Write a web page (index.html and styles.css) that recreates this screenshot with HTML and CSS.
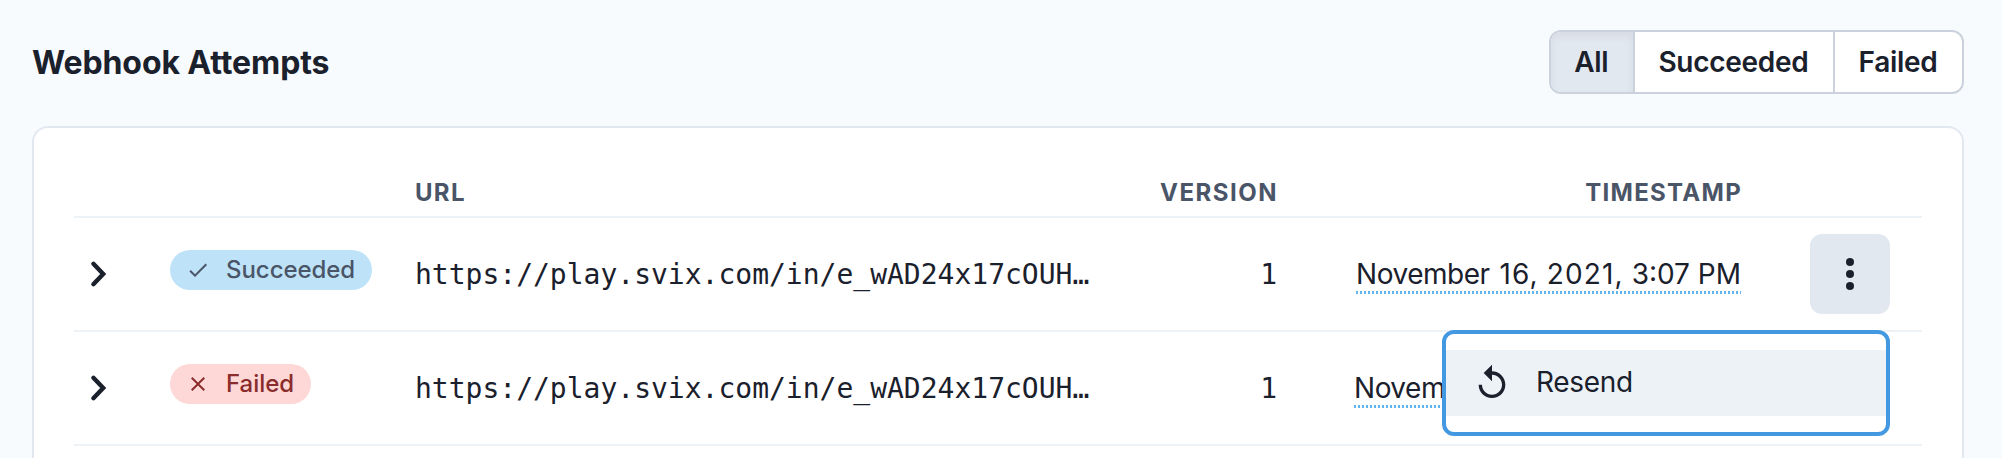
FILE: index.html
```html
<!DOCTYPE html>
<html lang="en">
<head>
<meta charset="utf-8">
<title>Webhook Attempts</title>
<link rel="stylesheet" href="styles.css">
</head>
<body>
<header class="page-header">
  <h1 class="title">Webhook Attempts</h1>
  <div class="filter">
    <button class="filter-btn active">All</button>
    <button class="filter-btn">Succeeded</button>
    <button class="filter-btn">Failed</button>
  </div>
</header>
<main class="card">
  <div class="row head">
    <span></span><span></span>
    <span>URL</span>
    <span class="right wide">Version</span>
    <span class="right">Timestamp</span>
    <span></span>
  </div>
  <div class="row">
    <svg class="chevron" viewBox="0 0 24 24"><path d="M9.7 6.9 14.6 12l-4.9 5.1"/></svg>
    <span class="badge ok"><svg viewBox="0 0 24 24"><path d="M9 16.17L4.83 12l-1.42 1.41L9 19 21 7l-1.41-1.41z"/></svg>Succeeded</span>
    <span class="url">https://play.svix.com/in/e_wAD24x17cOUH…</span>
    <span class="version">1</span>
    <span class="right"><span class="time"><span class="month">November</span> <span class="day">16, 2021,</span> 3:07 PM</span></span>
    <div class="actions">
      <button class="more"><svg viewBox="0 0 40 40"><circle cx="20" cy="8" r="4"/><circle cx="20" cy="20" r="4"/><circle cx="20" cy="32" r="4"/></svg></button>
      <div class="menu">
        <div class="menu-item"><svg viewBox="0 0 24 24"><path d="M12 5V1L7 6l5 5V7c3.31 0 6 2.69 6 6s-2.69 6-6 6-6-2.69-6-6H4c0 4.42 3.58 8 8 8s8-3.58 8-8-3.58-8-8-8z"/></svg><span>Resend</span></div>
      </div>
    </div>
  </div>
  <div class="row">
    <svg class="chevron" viewBox="0 0 24 24"><path d="M9.7 6.9 14.6 12l-4.9 5.1"/></svg>
    <span class="badge fail"><svg viewBox="0 0 24 24"><path d="M19 6.41L17.59 5 12 10.59 6.41 5 5 6.41 10.59 12 5 17.59 6.41 19 12 13.41 17.59 19 19 17.59 13.41 12z"/></svg>Failed</span>
    <span class="url">https://play.svix.com/in/e_wAD24x17cOUH…</span>
    <span class="version">1</span>
    <span class="right"><span class="time"><span class="month">November</span> <span class="day">16, 2021,</span> 3:06 PM</span></span>
    <div class="actions"></div>
  </div>
</main>
</body>
</html>
```
FILE: styles.css
```css
* { box-sizing: border-box; }
body {
  margin: 0;
  height: 458px;
  overflow: hidden;
  padding: 30px 38px 0 32px;
  background: #f8fbfe;
  color: #1a202c;
  font-family: Inter, "Liberation Sans", sans-serif;
  font-size: 28px;
}
.page-header {
  display: flex;
  justify-content: space-between;
  align-items: center;
  height: 64px;
  margin-bottom: 32px;
}
.title {
  margin: 0;
  padding-top: 1px;
  font-size: 32px;
  font-weight: 700;
  line-height: 63px;
  letter-spacing: -0.1px;
}
.filter {
  display: flex;
  height: 64px;
  border: 2px solid #cbd2dd;
  border-radius: 12px;
  overflow: hidden;
  background: #fff;
}
.filter-btn {
  margin: 0;
  padding: 0 24.5px 0 23.5px;
  border: 0;
  border-left: 2px solid #cbd2dd;
  background: none;
  color: inherit;
  font: 600 28px/60px Inter, "Liberation Sans", sans-serif;
  letter-spacing: -0.28px;
}
.filter-btn.active {
  border-left: 0;
  background: #e2e8f0;
  box-shadow: inset 0 4px 8px rgba(0, 0, 0, 0.06);
}
.card {
  width: 1932px;
  height: 332px;
  padding: 0 40px;
  border: 2px solid #e2e8f0;
  border-bottom: 0;
  border-radius: 16px 16px 0 0;
  background: #fff;
}
.row {
  display: grid;
  grid-template-columns: 96px 245px 714px 148px 464px 1fr;
  align-items: center;
  height: 114px;
  border-bottom: 2px solid #edf2f7;
}
.head {
  height: 90px;
  padding-top: 41px;
  color: #4a5568;
  font-size: 24px;
  font-weight: 700;
  letter-spacing: 1.3px;
  text-transform: uppercase;
}
.right { text-align: right; }
.head .right { margin-right: -1px; }
.wide { letter-spacing: 1.5px; }
.chevron {
  width: 48px;
  height: 48px;
  fill: none;
  stroke: #1a202c;
  stroke-width: 2.2;
  stroke-linecap: round;
  stroke-linejoin: miter;
}
.badge {
  display: inline-flex;
  align-items: center;
  justify-self: start;
  gap: 16px;
  height: 40px;
  margin-bottom: 8px;
  padding: 0 17px 0 16px;
  border-radius: 20px;
  font-size: 24px;
  font-weight: 500;
  line-height: 28px;
  letter-spacing: -0.05px;
}
.badge svg { width: 24px; height: 24px; fill: currentColor; }
.ok { background: #bee3f8; color: #4a5568; }
.fail { background: #fed7d7; color: #8a2c2c; }
.url, .version { font-family: "DejaVu Sans Mono", monospace; white-space: nowrap; }
.version { text-align: right; }
.time {
  display: inline-block;
  margin-top: 2px;
  padding-bottom: 2px;
  line-height: 36px;
  white-space: nowrap;
  background: repeating-linear-gradient(90deg, #63b3ed 0 2px, transparent 2px 4px) left bottom / 100% 3px no-repeat;
}
.month { margin-right: 2px; letter-spacing: -0.5px; }
.day { letter-spacing: 1.15px; word-spacing: -1px; }
.actions {
  position: relative;
  justify-self: end;
  width: 80px;
  height: 80px;
  margin-right: 32px;
}
.more {
  display: grid;
  place-items: center;
  width: 80px;
  height: 80px;
  padding: 0;
  border: 0;
  border-radius: 12px;
  background: #e2e8f0;
}
.more svg { width: 40px; height: 40px; fill: #1a202c; }
.menu {
  position: absolute;
  top: 96px;
  right: 0;
  z-index: 1;
  width: 448px;
  height: 106px;
  padding: 16px 0;
  border: 4px solid #4299e1;
  border-radius: 12px;
  background: #fff;
}
.menu-item {
  display: flex;
  align-items: center;
  gap: 24px;
  height: 66px;
  padding: 0 26px;
  background: #edf2f7;
  letter-spacing: -0.3px;
}
.menu-item span { padding-bottom: 2px; }
.menu-item svg { width: 40px; height: 40px; fill: #1a202c; }
```
